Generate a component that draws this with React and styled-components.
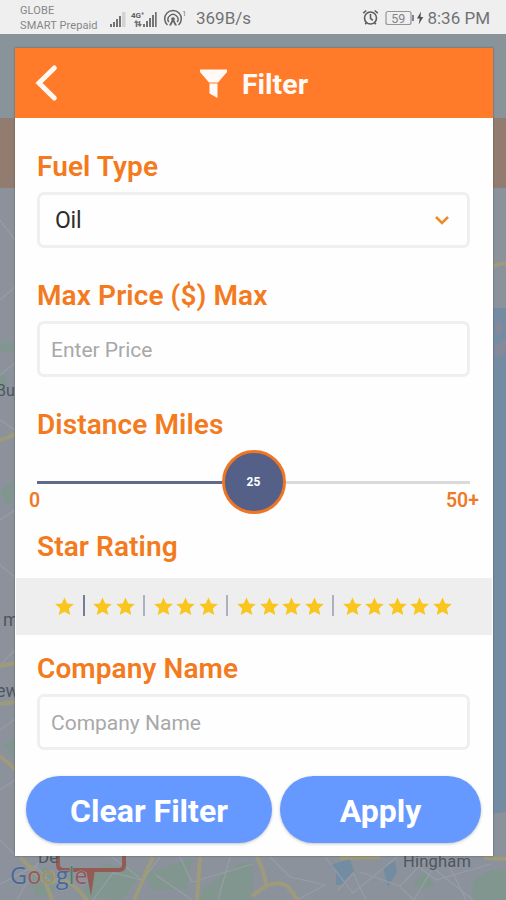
import React from "react";
import styled, { createGlobalStyle } from "styled-components";

const GlobalStyle = createGlobalStyle`
  * { box-sizing: border-box; }
  body { margin: 0; font-family: Roboto, "Liberation Sans", sans-serif; }
`;

const Screen = styled.div`
  width: 506px;
  height: 900px;
  display: flex;
  flex-direction: column;
  overflow: hidden;
`;

const StatusBar = styled.header`
  height: 34px;
  flex: none;
  display: flex;
  align-items: center;
  padding: 2px 16px 0 20px;
  background: #efeff0;
  color: #727274;
`;

const Carrier = styled.div`
  width: 89px;
  font-size: 11px;
  letter-spacing: 0.1px;
  line-height: 15px;
  white-space: nowrap;
  color: #868687;
`;

const StatusIcons = styled.svg`
  flex: none;
  display: block;
`;

const StatusText = styled.span`
  font-size: 17px;
  line-height: 20px;
  white-space: nowrap;
  margin-left: ${(p) => p.$gap}px;
`;

const Spacer = styled.div`
  flex: 1;
`;

const Stage = styled.main`
  position: relative;
  flex: 1;
  padding: 14px 13px 44px 15px;
  background: #8a939a;
`;

const MapBackdrop = styled.svg`
  position: absolute;
  inset: 0;
  display: block;
`;

const Dialog = styled.section`
  position: relative;
  height: 808px;
  background: #fefefe;
  box-shadow: 0 0 2px rgba(30, 35, 45, 0.45);
`;

const DialogHeader = styled.div`
  height: 70px;
  display: grid;
  grid-template-columns: 62px 1fr 62px;
  align-items: center;
  background: #ff7b29;
`;

const BackButton = styled.button`
  border: 0;
  padding: 0 0 0 19px;
  background: none;
  display: flex;
`;

const Title = styled.h1`
  margin: 0;
  display: flex;
  align-items: center;
  justify-content: center;
  gap: 14px;
  color: #fffaf5;
  font-size: 28.5px;
  line-height: 34px;
  font-weight: 700;
  padding: 3px 1px 0 0;
`;

const Form = styled.form`
  display: flex;
  flex-direction: column;
  padding-top: 31px;
`;

const Field = styled.div`
  display: flex;
  flex-direction: column;
  padding: 0 23px 0 22px;
  margin-bottom: ${(p) => p.$after}px;
`;

const Label = styled.label`
  height: 36px;
  line-height: 36px;
  font-size: 28px;
  font-weight: 600;
  letter-spacing: 0.1px;
  color: #f37a1d;
  white-space: nowrap;
`;

const Box = styled.div`
  height: 56px;
  margin-top: 7px;
  display: flex;
  align-items: center;
  justify-content: space-between;
  border: 3px solid #efefef;
  border-radius: 7px;
  padding: 1px 18px 0 ${(p) => p.$indent}px;
`;

const SelectValue = styled.span`
  font-size: 23px;
  letter-spacing: -0.2px;
  color: #2c2c2c;
`;

const Input = styled.input`
  width: 100%;
  border: 0;
  outline: 0;
  padding: 0;
  background: none;
  font: 400 21px Roboto, "Liberation Sans", sans-serif;
  color: #222;
  &::placeholder {
    color: #a8a8a8;
    opacity: 1;
  }
`;

const Slider = styled.div`
  height: 64px;
  margin-top: 7px;
  display: flex;
  align-items: center;
`;

const Track = styled.div`
  height: 3px;
  flex: 1;
  background: ${(p) => (p.$filled ? "#606b8c" : "#dadadb")};
`;

const Thumb = styled.div`
  width: 64px;
  height: 64px;
  flex: none;
  border-radius: 50%;
  border: 3px solid #ee7524;
  background: #556088;
  color: #fff;
  display: grid;
  place-items: center;
  font-size: 12px;
  font-weight: 700;
`;

const RangeLabels = styled.div`
  display: flex;
  justify-content: space-between;
  margin: -26px -9px 0 -8px;
  height: 24px;
  line-height: 25px;
  font-size: 19.5px;
  font-weight: 600;
  color: #ee7a26;
`;

const RatingBand = styled.div`
  height: 57px;
  margin: 13px 1px 16px 1px;
  display: flex;
  align-items: center;
  background: #eeeeee;
  padding-left: 39px;
`;

const RatingOption = styled.div`
  display: flex;
  gap: 3.5px;
`;

const Divider = styled.span`
  width: 2px;
  height: 21px;
  margin: 0 8.6px 2px 8.6px;
  background: ${(p) => (p.$strong ? "#777c95" : "#adb0be")};
`;

const Actions = styled.div`
  display: grid;
  grid-template-columns: 246px 201px;
  gap: 8px;
  padding-left: 11px;
`;

const ActionButton = styled.button`
  height: 67px;
  border: 0;
  border-radius: 34px;
  padding: 2px 0 0;
  background: #6699ff;
  color: #fff;
  font: 700 32px Roboto, "Liberation Sans", sans-serif;
  box-shadow: 0 1px 3px rgba(90, 90, 90, 0.35);
`;

function Star() {
  return (
    <svg width="19" height="19" viewBox="0 0 19 19">
      <path
        d="M9.5 .4 12.2 6.5 18.8 7.1 13.8 11.5 15.3 18.1 9.5 14.7 3.7 18.1 5.2 11.5.2 7.1 6.8 6.5Z"
        fill="#f9c51f"
      />
    </svg>
  );
}

function NetworkIcons() {
  return (
    <StatusIcons width="80" height="22" viewBox="0 0 80 22">
      <g fill="#747476">
        <path d="M1 17h2v3H1zM4 15h2v5H4zM7 12h2v8H7z" />
        <path d="M10 9h2v11h-2z" />
        <path d="M13 5h3.5v15H13z" fill="#d2d2d4" />
        <path d="M34 17h2v3h-2zM37 14h2v6h-2zM40 11h2v9h-2zM43 8h2v12h-2zM46 5h1.7v15H46z" />
        <path d="m27 13 3 3h-1.7v4h-1.6v-4H25zM31 20l-3-3h1.7v-3h1.6v3H33z" />
      </g>
      <text x="22" y="10.5" fontSize="8" fontWeight="700" fill="#5e5e60">4G⁺</text>
      <g fill="none" stroke="#666668" strokeWidth="1.5">
        <path d="M58.5 18a8.3 8.3 0 1 1 11 0" />
        <path d="M59.8 15.2a5 5 0 1 1 8.4 0" />
      </g>
      <path d="M64 10.2a1.8 1.8 0 0 1 1.3 3.1l2.7 5.2h-2.1l-1.9-3.7-1.9 3.7H60l2.7-5.2a1.8 1.8 0 0 1 1.3-3.1z" fill="#666668" />
      <text x="73" y="9" fontSize="8" fill="#808082">1</text>
    </StatusIcons>
  );
}

function PowerIcons() {
  return (
    <StatusIcons width="63" height="20" viewBox="0 0 63 20">
      <g fill="none" stroke="#5d5d5f" strokeWidth="1.6">
        <circle cx="9.5" cy="10" r="6" />
        <path d="M9.5 6v4.3l2.3 2M2.2 5.1 5.3 2.5M13.7 2.5l3.1 2.6M5.5 14.5l-1.3 1.8M13.5 14.5l1.3 1.8" />
      </g>
      <rect x="25" y="3.5" width="25" height="13" rx="2" fill="none" stroke="#959597" strokeWidth="1.2" />
      <path d="M51 7h2v6h-2z" fill="#858587" />
      <text x="37.3" y="14.5" textAnchor="middle" fontSize="12.5" fill="#848487">59</text>
      <path d="M60 3.5 56 10.5h2.7l-1 6 4.6-7.6H59.5z" fill="#505052" />
    </StatusIcons>
  );
}

function CityMap() {
  return (
    <MapBackdrop width="506" height="866" viewBox="0 34 506 866">
      <rect y="34" width="506" height="84" fill="#89939a" />
      <rect y="118" width="506" height="70" fill="#927c70" />
      <rect y="188" width="506" height="712" fill="#8b929c" />
      <path d="M492 308h14v504l-14 2z" fill="#748ca2" />
      <path d="M494 346l12-7v12l-6 5h-6zM494 325l5-5 4 10-6 6z" fill="#85899a" />
      <g fill="#829690">
        <path d="M0 347q9-9 15-3v7L0 352zM0 377q8-7 7 9l-7 3zM0 490l13-10v20l-7 6zM4 745l11-8v22zM28 878l18-11 14 14-10 15H36zM75 897l30-34 37 10-20 27zM205 887l35-24h13v37h-55zM146 873l46-15-5 32h-36zM412 885l11-13 12 13-13 6zM476 879q12-11 30-10v31h-32q-5-11 2-21z" />
      </g>
      <g fill="#748ca2">
        <path d="M330 865l20-6 4 12-10 14h-8v-13zM383 867l12-6 2 11-9 15z" />
      </g>
      <g fill="none" stroke="#979da5" strokeWidth="1.2">
        <path d="M0 220l15 20M0 300l15-13M0 375l15-12M0 420l15 10M0 520l15-10M0 565l15 12M0 665l15-15M0 730l15-11M0 790l15-10M0 840l15 15M160 857l-17 23-30-7-20 27M156 875l36 25M180 857l12 25 61-18M230 857l-12 43M270 857l20 20 35 8-28 15M325 857l28 36 44-36M360 872l40 14 28-29M400 887l14 13 19-32 40 32M448 863l18 37M338 890l15-17 13 27M410 860l26 20 55-16M0 884l35-18 18 18M112 857l27 20M40 859l-23 41" />
      </g>
      <g fill="none" stroke="#9d9b7c" strokeWidth="4">
        <path d="M0 440q8-2 15-6M0 666l15-3M0 704l15-2M0 756l15 13M20 857l26 26 6 17M153 857l-19 43M200 857l-3 43M53 882q12-10 34 18M257 857q8 16 9 29l-14 10M266 886q14-6 22 1l10 13M340 858l40-1M484 858l22 1M492 266l14-3" />
      </g>
      <path d="M58 855v10q0 5 6 5h55q5 0 5-5v-10" fill="none" stroke="#945b54" strokeWidth="4" />
      <path d="M86 870h9l-4 26z" fill="#945b54" />
      <g fill="#50565e" fontSize="17">
        <text x="-4" y="396" fontSize="16">Bu</text>
        <text x="3" y="626" fontSize="18">m</text>
        <text x="-4" y="697" fontSize="18">ew</text>
        <text x="38" y="863">De</text>
        <text x="403" y="866.5" fontSize="16.5" letterSpacing="0.2">Hingham</text>
      </g>
      <text
        x="10"
        y="884"
        fontFamily='"Open Sans", sans-serif'
        fontSize="23.5"
        fontWeight="500"
        letterSpacing="0.1"
        stroke="#989fa6"
        strokeWidth="1.2"
        paintOrder="stroke"
      >
        <tspan fill="#48689a">G</tspan>
        <tspan fill="#99565a">o</tspan>
        <tspan fill="#a29054">o</tspan>
        <tspan fill="#48689a">g</tspan>
        <tspan fill="#4d8069">l</tspan>
        <tspan fill="#99565a">e</tspan>
      </text>
    </MapBackdrop>
  );
}

export default function App() {
  return (
    <Screen>
      <GlobalStyle />
      <StatusBar>
        <Carrier>
          GLOBE
          <br />
          SMART Prepaid
        </Carrier>
        <NetworkIcons />
        <StatusText $gap={7}>369B/s</StatusText>
        <Spacer />
        <PowerIcons />
        <StatusText $gap={3}>8:36 PM</StatusText>
      </StatusBar>
      <Stage>
        <CityMap />
        <Dialog>
          <DialogHeader>
            <BackButton type="button" aria-label="Back">
              <svg width="24" height="38" viewBox="0 0 24 38">
                <path d="M20.3 4 5 19 20.3 34" fill="none" stroke="#fff8f2" strokeWidth="5" strokeLinecap="round" />
              </svg>
            </BackButton>
            <Title>
              <svg width="29" height="32" viewBox="0 0 29 32">
                <path d="M1 0.5h27v2.5L19 13.5H10L1 3zM10.5 14.5h8V29l-8-4.5z" fill="#fffaf5" />
              </svg>
              Filter
            </Title>
          </DialogHeader>
          <Form>
            <Field $after={30}>
              <Label>Fuel Type</Label>
              <Box $indent={15}>
                <SelectValue>Oil</SelectValue>
                <svg width="14" height="9" viewBox="0 0 14 9">
                  <path d="m1 1 6 6 6-6" fill="none" stroke="#ee8c2c" strokeWidth="2.6" />
                </svg>
              </Box>
            </Field>
            <Field $after={30}>
              <Label>Max Price ($) Max</Label>
              <Box $indent={11}>
                <Input placeholder="Enter Price" />
              </Box>
            </Field>
            <Field $after={17}>
              <Label>Distance Miles</Label>
              <Slider>
                <Track $filled />
                <Thumb>25</Thumb>
                <Track />
              </Slider>
              <RangeLabels>
                <span>0</span>
                <span>50+</span>
              </RangeLabels>
            </Field>
            <Field $after={0}>
              <Label>Star Rating</Label>
            </Field>
            <RatingBand>
              {[1, 2, 3, 4, 5].map((count) => (
                <React.Fragment key={count}>
                  {count > 1 && <Divider $strong={count === 2} />}
                  <RatingOption>
                    {Array.from({ length: count }, (_, i) => (
                      <Star key={i} />
                    ))}
                  </RatingOption>
                </React.Fragment>
              ))}
            </RatingBand>
            <Field $after={26}>
              <Label>Company Name</Label>
              <Box $indent={11}>
                <Input placeholder="Company Name" />
              </Box>
            </Field>
            <Actions>
              <ActionButton type="button">Clear Filter</ActionButton>
              <ActionButton type="button">Apply</ActionButton>
            </Actions>
          </Form>
        </Dialog>
      </Stage>
    </Screen>
  );
}
